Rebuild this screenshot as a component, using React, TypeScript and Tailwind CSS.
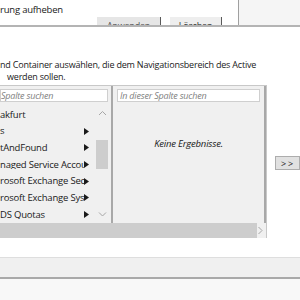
import React from 'react';

const rows = [
  { label: 'akfurt', arrow: false },
  { label: 's', arrow: true },
  { label: 'tAndFound', arrow: true },
  { label: 'naged Service Accou', arrow: true },
  { label: 'rosoft Exchange Sec', arrow: true },
  { label: 'rosoft Exchange Sys', arrow: true },
  { label: 'DS Quotas', arrow: true },
];

function Arrow() {
  return (
    <svg width="5" height="7" viewBox="0 0 5 7" className="shrink-0">
      <path d="M0 0 L5 3.5 L0 7 Z" fill="#1a1a1a" />
    </svg>
  );
}

function Chevron({ dir }: { dir: 'up' | 'down' | 'right' }) {
  const d =
    dir === 'up' ? 'M1 5 L4.5 1.5 L8 5' : dir === 'down' ? 'M1 1.5 L4.5 5 L8 1.5' : 'M1.5 1 L5 4.5 L1.5 8';
  return (
    <svg width="9" height="9" viewBox="0 0 9 9">
      <path d={d} fill="none" stroke="#a6a6a6" strokeWidth="1" />
    </svg>
  );
}

export default function App() {
  return (
    <div
      className="relative flex h-[300px] w-[300px] flex-col overflow-hidden bg-white text-[9px] tracking-[-0.2px] text-[#1a1a1a]"
      style={{ fontFamily: '"Open Sans", "Noto Sans", sans-serif' }}
    >
      {/* oberer Bereich, abgeschnitten */}
      <div className="flex h-[27px] shrink-0 border-b-2 border-[#b4b4b4]">
        <div className="flex min-w-0 flex-1 flex-col overflow-hidden">
          <div className="pt-[3px] text-[9.5px] leading-[13px]">rung aufheben</div>
          <div className="mt-[1px] flex gap-[9px] pl-[97px]">
            <div className="flex h-[14px] w-[64px] justify-center border-r border-[#5a5a5a] bg-[#e6e6e6] pt-[3px] leading-[12px] text-[#555]">
              Anwenden
            </div>
            <div className="flex h-[14px] w-[52px] justify-center border-r border-[#5a5a5a] bg-[#eeeeee] pt-[3px] leading-[12px] text-[#333]">
              Löschen
            </div>
          </div>
        </div>
        <div className="w-[62px] border-l border-[#a0a0a0] bg-[#f5f5f5]" />
      </div>

      {/* Beschreibung */}
      <div className="mt-[32px] leading-[12px]">
        <div>nd Container auswählen, die dem Navigationsbereich des Active</div>
        <div className="pl-[7px]">werden sollen.</div>
      </div>

      {/* Spaltenbrowser */}
      <div className="mt-[2px] flex items-start">
        <div className="flex h-[153px] w-[271px] flex-col border-t border-r border-[#c8c8c8] bg-[#f0f0f0]">
          <div className="flex min-h-0 flex-1">
            {/* Spalte 1 */}
            <div className="flex w-[113px] shrink-0 flex-col border-r-2 border-[#a8a8a8]">
              <div className="mt-[3px] mr-[3px] flex h-[13px] items-center border border-[#cfcfcf] bg-white italic leading-none text-[#808080]">
                Spalte suchen
              </div>
              <div className="flex min-h-0 flex-1">
                <div className="mt-[4px] flex min-w-0 flex-1 flex-col">
                  {rows.map((r) => (
                    <div key={r.label} className="flex h-[17px] items-center pr-[6px] text-[9.5px]">
                      <span className="min-w-0 flex-1 overflow-hidden whitespace-nowrap leading-none">{r.label}</span>
                      {r.arrow && <Arrow />}
                    </div>
                  ))}
                </div>
                <div className="mr-[2px] flex w-[14px] shrink-0 flex-col items-center pt-[8px] pb-[3px]">
                  <Chevron dir="up" />
                  <div className="mt-[21px] h-[29px] w-[12px] bg-[#cdcdcd]" />
                  <div className="flex-1" />
                  <Chevron dir="down" />
                </div>
              </div>
            </div>
            {/* Spalte 2 */}
            <div className="flex min-w-0 flex-1 flex-col border-r-2 border-[#a8a8a8]">
              <div className="mx-[4px] mt-[3px] flex h-[13px] items-center border border-[#cfcfcf] bg-white pl-[2px] italic leading-none text-[#808080]">
                In dieser Spalte suchen
              </div>
              <div className="mt-[37px] text-center text-[9.5px] italic leading-none">Keine Ergebnisse.</div>
            </div>
          </div>
          {/* horizontale Bildlaufleiste */}
          <div className="flex h-[15px] shrink-0 items-center">
            <div className="h-full w-[257px] bg-[#cdcdcd]" />
            <div className="flex flex-1 justify-center">
              <Chevron dir="right" />
            </div>
          </div>
        </div>
        <div className="mt-[71px] ml-[8px] flex h-[14px] w-[30px] items-center border border-[#adadad] bg-[#e1e1e1] pl-[5px] leading-none">
          &gt; &gt;
        </div>
      </div>

      {/* unterer Bereich */}
      <div className="mt-[19px] h-[22px] shrink-0 border-t border-b-2 border-t-[#dedede] border-b-[#a9a9a9] bg-[#f0f0f0]" />
      <div className="flex-1 bg-[#f8f8f8]" />
    </div>
  );
}
